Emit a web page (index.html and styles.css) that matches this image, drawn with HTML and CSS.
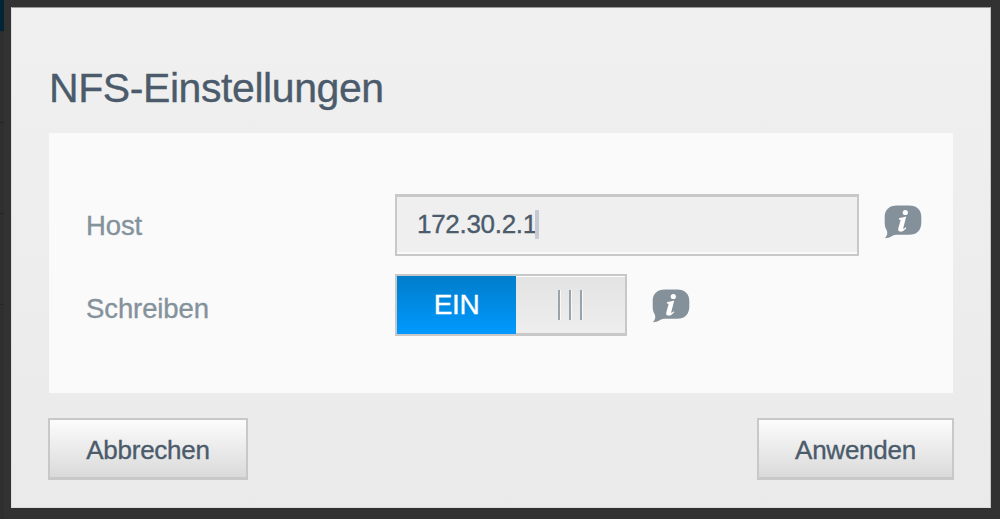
FILE: index.html
```html
<!DOCTYPE html>
<html lang="de">
<head>
    <meta charset="UTF-8">
    <meta name="viewport" content="width=device-width, initial-scale=1.0">
    <title>NFS-Einstellungen</title>
    <link rel="stylesheet" href="styles.css">
</head>
<body>
    <div class="page_edge">
        <div class="edge_nav"></div>
        <div class="edge_row"></div>
        <div class="edge_row"></div>
        <div class="edge_row"></div>
    </div>
    <section class="dialog">
        <h1 class="dialog_title">NFS-Einstellungen</h1>
        <div class="panel">
            <div class="form_row">
                <label class="label">Host</label>
                <div class="text_field"><span>172.30.2.1</span><span class="caret"></span></div>
                <svg class="info_icon" viewBox="0 0 38 36">
                    <path class="bubble" d="M13 1.5H25C33 1.5 37.3 6 37.3 13V18.5C37.3 26 33 30.8 25 30.8H12C9 30.8 6 34.3 .8 34.3C3 31.8 4 29.5 2.8 26.5C1.2 24 .7 21.5 .7 18.5V13C.7 6 5 1.5 13 1.5Z"/>
                    <circle class="mark" cx="21.3" cy="8.5" r="2.6"/>
                    <path class="mark" d="M15 14.2C17.5 13.8 19.5 13.2 22.2 12.6L19.2 24.3C19 25.3 19.8 25 21.6 23.2L22.3 24.2C19.8 26.9 17.8 27.8 16.2 27.6C14.3 27.4 13.8 26.2 14.3 24.5L16.7 15.8L14.8 15.4Z"/>
                </svg>
            </div>
            <div class="form_row write_row">
                <label class="label">Schreiben</label>
                <div class="toggle">
                    <div class="toggle_on">EIN</div>
                    <div class="toggle_grip"><i></i><i></i><i></i></div>
                </div>
                <svg class="info_icon" viewBox="0 0 38 36">
                    <path class="bubble" d="M13 1.5H25C33 1.5 37.3 6 37.3 13V18.5C37.3 26 33 30.8 25 30.8H12C9 30.8 6 34.3 .8 34.3C3 31.8 4 29.5 2.8 26.5C1.2 24 .7 21.5 .7 18.5V13C.7 6 5 1.5 13 1.5Z"/>
                    <circle class="mark" cx="21.3" cy="8.5" r="2.6"/>
                    <path class="mark" d="M15 14.2C17.5 13.8 19.5 13.2 22.2 12.6L19.2 24.3C19 25.3 19.8 25 21.6 23.2L22.3 24.2C19.8 26.9 17.8 27.8 16.2 27.6C14.3 27.4 13.8 26.2 14.3 24.5L16.7 15.8L14.8 15.4Z"/>
                </svg>
            </div>
        </div>
        <div class="button_row">
            <button class="btn cancel">Abbrechen</button>
            <button class="btn apply">Anwenden</button>
        </div>
    </section>
</body>
</html>
```
FILE: styles.css
```css
*{
    margin:0;
    padding:0;
    box-sizing:border-box;
}
body{
    height:519px;
    display:flex;
    align-items:flex-start;
    overflow:hidden;
    background-color:#323232;
    font-family:"Liberation Sans", Arial, sans-serif;
    color:#4b5b6b;
    -webkit-text-stroke:0.35px;
}
/* dimmed page left of the dialog */
.page_edge{
    width:4px;
    height:519px;
    margin-right:7px;
    background-color:#2f2f2f;
}
.edge_nav{
    height:32px;
    background-color:#022536;
    border-bottom:1px solid #292929;
}
.edge_row{
    height:91px;
    border-bottom:1px solid #252525;
}
.dialog{
    width:980px;
    height:501px;
    margin-top:7px;
    padding:57px 37px 0;
    border:1px solid #c4c4c4;
    border-top-color:#999999;
    border-left-color:#dddddd;
    border-bottom-color:#dcdcdc;
    background:linear-gradient(#f0f0f0, #eaeaea);
}
.dialog_title{
    height:68px;
    font-size:41px;
    line-height:46px;
    font-weight:normal;
    letter-spacing:-0.42px;
}
.panel{
    width:904px;
    height:260px;
    padding:61px 0 0 37px;
    background-color:#fafafa;
}
.form_row{
    display:flex;
    align-items:center;
    height:62px;
    margin-bottom:18px;
}
.label{
    width:309px;
    padding-top:1px;
    font-size:27.5px;
    letter-spacing:-0.1px;
    color:#84929c;
}
.text_field{
    width:464px;
    height:62px;
    padding:0 0 2px 20px;
    display:flex;
    align-items:center;
    border:2px solid #c8c8c8;
    border-top-width:3px;
    background-color:#efefef;
    box-shadow:inset 0 -2px 0 #fafafa;
    font-size:26px;
    letter-spacing:-0.3px;
}
.caret{
    width:4px;
    height:29px;
    margin-left:-2px;
    background-color:#c5c9d1;
    border-radius:1px;
}
.info_icon{
    width:38px;
    height:36px;
    margin:0 0 7px 25px;
}
.bubble{
    fill:#84919b;
}
.mark{
    fill:#ffffff;
}
.write_row .label{
    padding-top:8px;
}
.write_row .info_icon{
    margin:1px 0 0 25px;
}
.toggle{
    width:232px;
    height:62px;
    display:flex;
    border:2px solid #c8c8c8;
}
.toggle_on{
    width:119px;
    height:58px;
    line-height:58px;
    text-align:center;
    font-size:28px;
    letter-spacing:-0.4px;
    color:#ffffff;
    background:linear-gradient(#007dca, #0099ff);
}
.toggle_grip{
    width:109px;
    height:58px;
    display:flex;
    justify-content:center;
    align-items:center;
    gap:8px;
    border-top:1px solid #fcfcfc;
    border-bottom:1px solid #c8c8c8;
    background:linear-gradient(#e3e3e3, #eeeeee);
}
.toggle_grip i{
    width:3px;
    height:30px;
    background-color:#97a4ad;
    border-right:1px solid #f8f8f8;
}
.button_row{
    width:906px;
    margin:25px 0 0 -1px;
    display:flex;
    justify-content:space-between;
}
.btn{
    height:62px;
    padding-top:3px;
    border:2px solid #c8c8c8;
    border-bottom-width:3px;
    background:linear-gradient(#fcfcfc, #dadada);
    font-family:inherit;
    font-size:26px;
    letter-spacing:-0.25px;
    color:#4b5b6b;
}
.cancel{
    width:200px;
}
.apply{
    width:197px;
}
```
